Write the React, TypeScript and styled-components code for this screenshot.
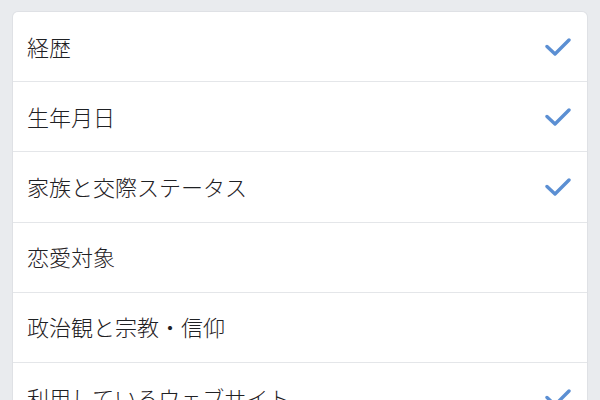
import styled, { createGlobalStyle } from 'styled-components'

const Global = createGlobalStyle`
  html, body {
    margin: 0;
    padding: 0;
    background: #e9ebee;
  }
  body {
    font-family: "Noto Sans CJK JP", "Noto Sans", sans-serif;
  }
`

const items = [
  {label: '経歴', checked: true},
  {label: '生年月日', checked: true},
  {label: '家族と交際ステータス', checked: true},
  {label: '恋愛対象', checked: false},
  {label: '政治観と宗教・信仰', checked: false},
  {label: '利用しているウェブサイト', checked: true},
]

const Check = () => (
  <svg width="26" height="20" viewBox="0 0 26 20">
    <path
      d="M2 9.5 L10 17 L24 3"
      fill="none"
      stroke="#5b8fd3"
      strokeWidth="3.4"
      strokeLinecap="round"
      strokeLinejoin="round"
    />
  </svg>
)

export default function App() {
  return (
    <Page>
      <Global />
      <Card>
        {items.map(item => (
          <Row key={item.label}>
            <Label>{item.label}</Label>
            {item.checked && <Check />}
          </Row>
        ))}
      </Card>
    </Page>
  )
}

const Page = styled.div`
  width: 600px;
  height: 400px;
  overflow: hidden;
  padding: 12px 13px 0 13px;
  box-sizing: border-box;
`

const Card = styled.div`
  background: #fff;
  border-radius: 5px;
  box-shadow: 0 0 0 1px #dfe1e5;
`

const Row = styled.div`
  display: flex;
  align-items: center;
  justify-content: space-between;
  height: 69.2px;
  padding: 0 16px 0 14px;
  border-bottom: 1px solid #e4e6e9;
`

const Label = styled.span`
  font-size: 22px;
  font-weight: 300;
  line-height: 1;
  margin-top: -2px;
  color: #1f2124;
`
